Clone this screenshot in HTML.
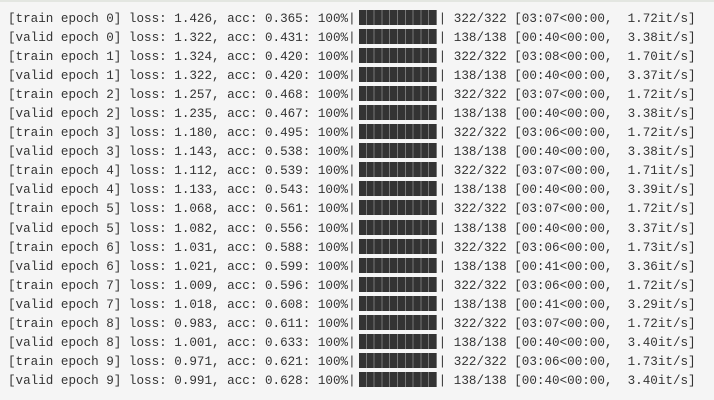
<!DOCTYPE html>
<html><head><meta charset="utf-8"><style>
html,body{margin:0;padding:0;}
body{width:714px;height:400px;background:#f5f5f5;overflow:hidden;}
.top{height:2px;background:#e3e6e1;}
pre{margin:0;padding:8px 0 0 8px;font-family:"Liberation Mono","DejaVu Sans Mono",monospace;font-size:12.6px;line-height:19.05px;color:#333;white-space:pre;}
i{display:inline-block;width:78px;height:15px;margin:0 2px 0 3px;vertical-align:-3px;background:repeating-linear-gradient(90deg,#333 0,#333 6.8px,#777 6.8px,#777 7.8px);}
</style></head><body><div class="top"></div><pre>[train epoch 0] loss: 1.426, acc: 0.365: 100%|<i></i>| 322/322 [03:07&lt;00:00,  1.72it/s]
[valid epoch 0] loss: 1.322, acc: 0.431: 100%|<i></i>| 138/138 [00:40&lt;00:00,  3.38it/s]
[train epoch 1] loss: 1.324, acc: 0.420: 100%|<i></i>| 322/322 [03:08&lt;00:00,  1.70it/s]
[valid epoch 1] loss: 1.322, acc: 0.420: 100%|<i></i>| 138/138 [00:40&lt;00:00,  3.37it/s]
[train epoch 2] loss: 1.257, acc: 0.468: 100%|<i></i>| 322/322 [03:07&lt;00:00,  1.72it/s]
[valid epoch 2] loss: 1.235, acc: 0.467: 100%|<i></i>| 138/138 [00:40&lt;00:00,  3.38it/s]
[train epoch 3] loss: 1.180, acc: 0.495: 100%|<i></i>| 322/322 [03:06&lt;00:00,  1.72it/s]
[valid epoch 3] loss: 1.143, acc: 0.538: 100%|<i></i>| 138/138 [00:40&lt;00:00,  3.38it/s]
[train epoch 4] loss: 1.112, acc: 0.539: 100%|<i></i>| 322/322 [03:07&lt;00:00,  1.71it/s]
[valid epoch 4] loss: 1.133, acc: 0.543: 100%|<i></i>| 138/138 [00:40&lt;00:00,  3.39it/s]
[train epoch 5] loss: 1.068, acc: 0.561: 100%|<i></i>| 322/322 [03:07&lt;00:00,  1.72it/s]
[valid epoch 5] loss: 1.082, acc: 0.556: 100%|<i></i>| 138/138 [00:40&lt;00:00,  3.37it/s]
[train epoch 6] loss: 1.031, acc: 0.588: 100%|<i></i>| 322/322 [03:06&lt;00:00,  1.73it/s]
[valid epoch 6] loss: 1.021, acc: 0.599: 100%|<i></i>| 138/138 [00:41&lt;00:00,  3.36it/s]
[train epoch 7] loss: 1.009, acc: 0.596: 100%|<i></i>| 322/322 [03:06&lt;00:00,  1.72it/s]
[valid epoch 7] loss: 1.018, acc: 0.608: 100%|<i></i>| 138/138 [00:41&lt;00:00,  3.29it/s]
[train epoch 8] loss: 0.983, acc: 0.611: 100%|<i></i>| 322/322 [03:07&lt;00:00,  1.72it/s]
[valid epoch 8] loss: 1.001, acc: 0.633: 100%|<i></i>| 138/138 [00:40&lt;00:00,  3.40it/s]
[train epoch 9] loss: 0.971, acc: 0.621: 100%|<i></i>| 322/322 [03:06&lt;00:00,  1.73it/s]
[valid epoch 9] loss: 0.991, acc: 0.628: 100%|<i></i>| 138/138 [00:40&lt;00:00,  3.40it/s]</pre></body></html>
